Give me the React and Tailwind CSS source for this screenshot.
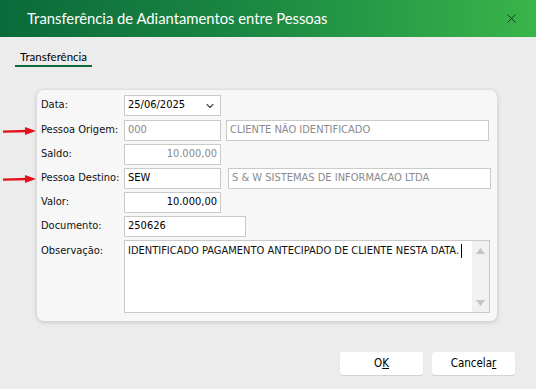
import { ChevronDown, X } from 'lucide-react';

// ─── Small pieces ─────────────────────────────────────────────────────────────
function Field({ w, value, right, muted, children }) {
  return (
    <div
      className={`h-[21px] border border-[#cacaca] bg-white flex items-center px-[3px] ${muted ? 'text-[#8a8a8a]' : 'text-black'} ${w}`}
    >
      <span className="flex-1 whitespace-nowrap overflow-hidden" style={{ textAlign: right ? 'right' : 'left' }}>{value}</span>
      {children}
    </div>
  );
}

function Arrow() {
  return (
    <svg width="34" height="8" viewBox="0 0 34 8" className="absolute -left-[38px] top-1/2 -translate-y-1/2">
      <line x1="0" y1="4.6" x2="26" y2="4" stroke="#e3101a" strokeWidth="2.4" />
      <path d="M22 0 L33 4 L22 8 Z" fill="#e3101a" />
    </svg>
  );
}

function Row({ label, arrow, children, className = '' }) {
  return (
    <div className={`flex items-center h-[21px] ${className}`}>
      <div className="w-[83px] relative whitespace-nowrap">
        {arrow && <Arrow />}
        {label}
      </div>
      <div className="flex items-center">{children}</div>
    </div>
  );
}

// ─── Main Component ───────────────────────────────────────────────────────────
export default function App() {
  return (
    <div className="w-[536px] h-[389px] bg-[#ececec] flex flex-col overflow-hidden" style={{ fontFamily: 'Tahoma, "DejaVu Sans Condensed", "Liberation Sans", sans-serif' }}>
      {/* Title bar */}
      <div className="h-[37px] shrink-0 flex items-center justify-between pl-[27px] pr-[17px] bg-gradient-to-r from-[#0a6a3a] via-[#1d8a43] to-[#39b54a]">
        <div className="text-white text-[14.8px]" style={{ fontFamily: 'Lato, "Open Sans", sans-serif' }}>
          Transferência de Adiantamentos entre Pessoas
        </div>
        <X size={15} strokeWidth={1.3} className="text-[#1a1a1a]" />
      </div>

      {/* Tab */}
      <div className="flex pl-[15px] pt-[13px]">
        <div className="px-[5px] pb-[1px] leading-[14px] border-b-[2px] border-[#0b6b3a] text-[11.5px] text-black" style={{ fontFamily: 'Lato, "Open Sans", sans-serif' }}>
          Transferência
        </div>
      </div>

      {/* Form panel */}
      <div className="ml-[37px] mt-[23px] w-[460px] h-[231px] shrink-0 rounded-[7px] bg-[#f7f7f7] shadow-[0_1px_5px_rgba(0,0,0,0.18)] pl-[4px] pt-[5px] flex flex-col gap-[3px] text-[11px] text-[#111]">
        <Row label="Data:" className="mb-[1px]">
          <Field w="w-[97px]" value="25/06/2025">
            <ChevronDown size={12} strokeWidth={2.2} className="text-[#444] mr-[1px]" />
          </Field>
        </Row>
        <Row label="Pessoa Origem:" arrow>
          <Field w="w-[97px]" value="000" muted />
          <div className="ml-[5px]"><Field w="w-[263px]" value="CLIENTE NÃO IDENTIFICADO" muted /></div>
        </Row>
        <Row label="Saldo:">
          <Field w="w-[97px]" value="10.000,00" right muted />
        </Row>
        <Row label="Pessoa Destino:" arrow>
          <Field w="w-[97px]" value="SEW" />
          <div className="ml-[7px]"><Field w="w-[263px]" value="S & W SISTEMAS DE INFORMACAO LTDA" muted /></div>
        </Row>
        <Row label="Valor:">
          <Field w="w-[97px]" value="10.000,00" right />
        </Row>
        <Row label="Documento:">
          <Field w="w-[122px]" value="250626" />
        </Row>
        <div className="flex items-start">
          <div className="w-[83px] pt-[3px]">Observação:</div>
          <div className="w-[366px] h-[73px] border border-[#cacaca] bg-white flex">
            <div className="flex-1 px-[3px] pt-[3px] whitespace-nowrap leading-[14px]">
              IDENTIFICADO PAGAMENTO ANTECIPADO DE CLIENTE NESTA DATA.
              <span className="inline-block w-[1px] h-[14px] bg-black align-top ml-[2px]" />
            </div>
            <div className="w-[17px] bg-[#f1f1f1] flex flex-col justify-between items-center pt-[7px] pb-[6px]">
              <svg width="9" height="6" viewBox="0 0 9 6"><path d="M0 6 L4.5 0 L9 6 Z" fill="#c4c4c4" /></svg>
              <svg width="9" height="6" viewBox="0 0 9 6"><path d="M0 0 L4.5 6 L9 0 Z" fill="#c4c4c4" /></svg>
            </div>
          </div>
        </div>
      </div>

      {/* Buttons */}
      <div className="flex justify-end gap-[9px] pr-[21px] mt-[31px] text-[11.5px]" style={{ fontFamily: '"DejaVu Sans Condensed", sans-serif' }}>
        <button className="w-[83px] h-[23px] rounded-[3px] bg-white shadow-[0_1px_1px_rgba(0,0,0,0.12)] text-black">
          O<span className="underline">K</span>
        </button>
        <button className="w-[83px] h-[23px] rounded-[3px] bg-white shadow-[0_1px_1px_rgba(0,0,0,0.12)] text-black">
          Cancela<span className="underline">r</span>
        </button>
      </div>
    </div>
  );
}
